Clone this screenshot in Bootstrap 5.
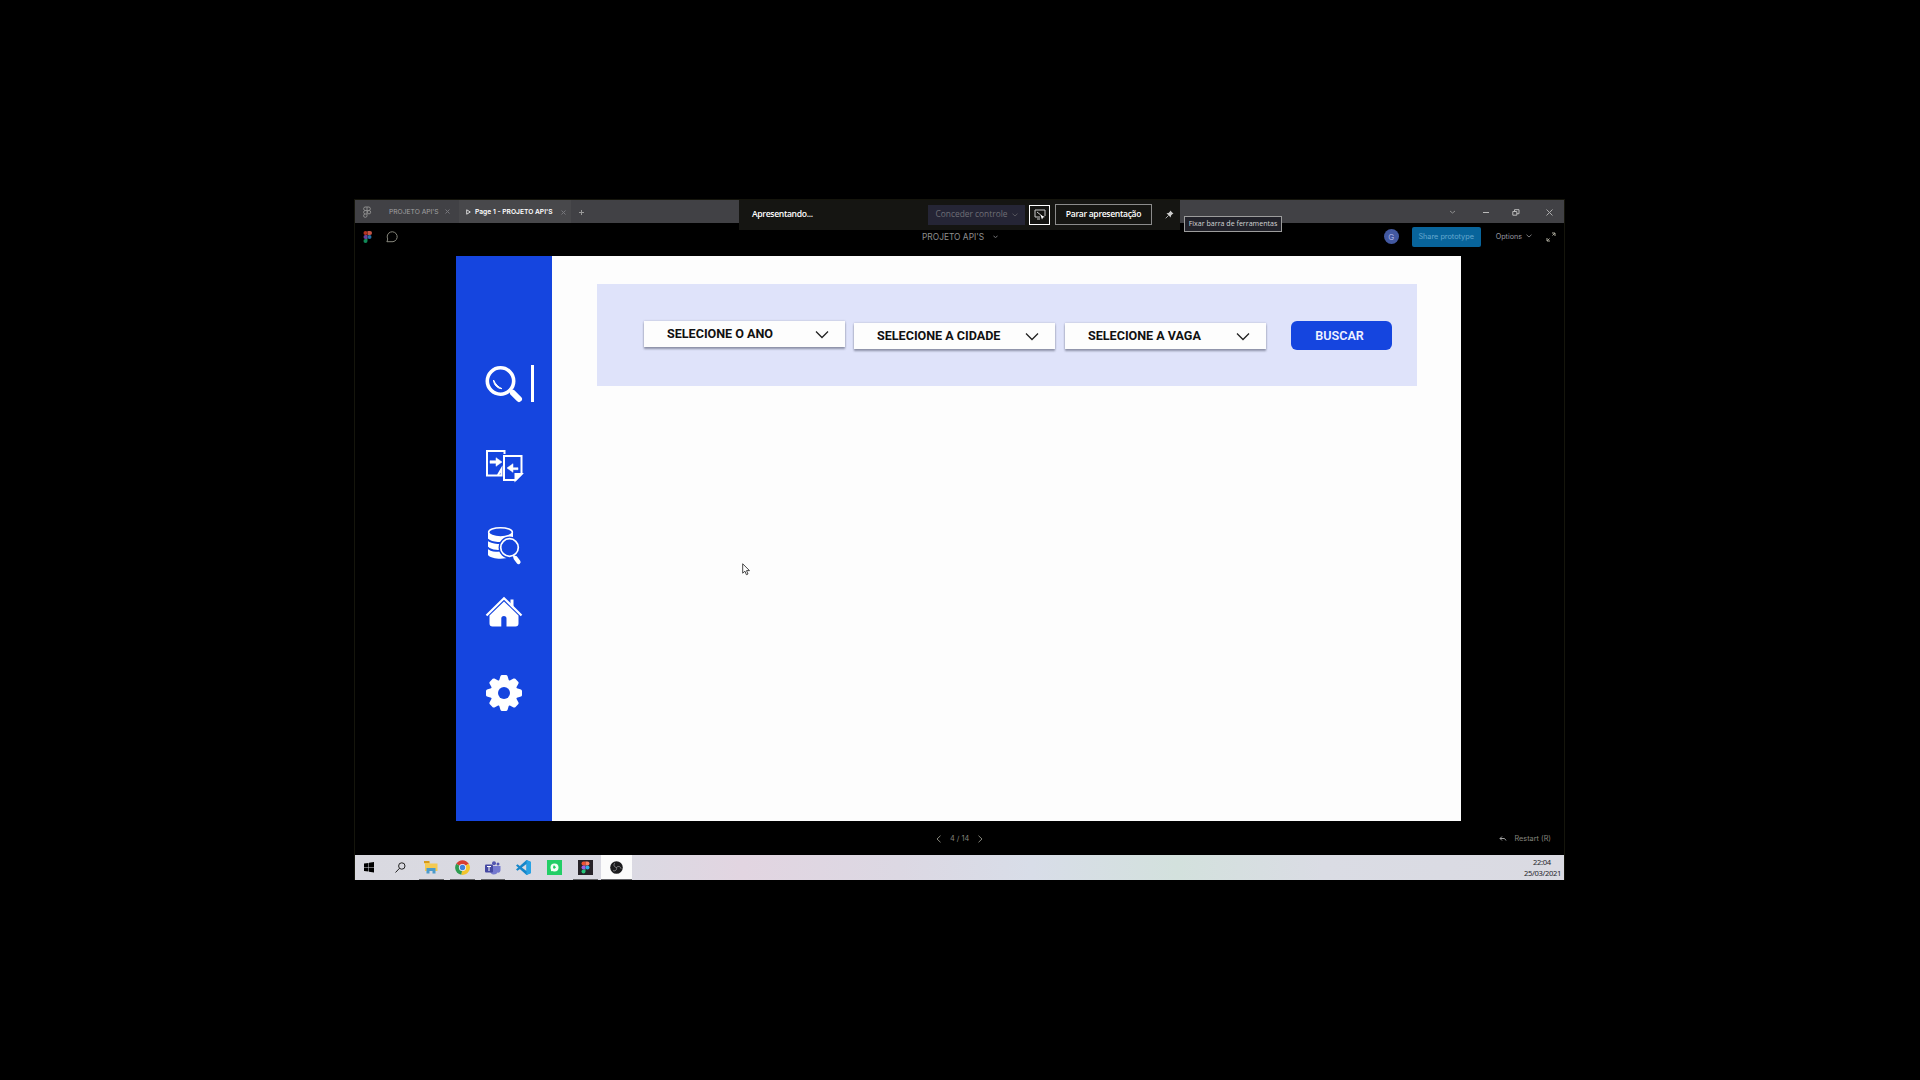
<!DOCTYPE html>
<html lang="pt-BR">
<head>
<meta charset="utf-8">
<meta name="viewport" content="width=device-width, initial-scale=1">
<title>Projeto API's</title>
<link href="https://cdn.jsdelivr.net/npm/bootstrap@5.3.0/dist/css/bootstrap.min.css" rel="stylesheet">
<style>
  body { background:#000; font-family:Inter,"Liberation Sans",sans-serif; overflow:hidden; height:1080px; line-height:1; white-space:nowrap; }
  svg { display:block; flex:none; }
  .desktop { width:1211px; height:681px; margin:199px 0 0 354px; }
  .desktop::after { content:""; position:absolute; inset:0; border:1px solid #15150c; border-bottom:0; pointer-events:none; }
  .titlebar { height:24px; padding-top:2px; background:#414145; color:#a2a2a4; font-size:6.7px; }
  .tab-active { width:112px; background:#48484b; color:#fff; font-weight:600; padding-left:7px; margin:-2px 0 0 1px; padding-top:2px; height:24px; }
  .tab-idle { width:65px; margin-left:17px; }
  .win-controls { gap:22px; padding-right:12px; color:#b0b0b0; }
  .proto-head { height:33px; color:#8f8f8f; padding-bottom:6px; }
  .file-name { font-size:8.4px; width:76px; }
  .avatar { width:15px; height:15px; background:#4258a0; color:#a5aee0; font-size:8px; }
  .share { width:69px; height:20px; background:#08649b; color:#65a8cf; font-size:7.3px; border-radius:2px; }
  .opts { font-size:7.2px; color:#9999a2; }
  .stage { width:1005px; height:565px; margin-left:102px; background:#fdfdfd; }
  .side { width:96px; background:#1545df; color:#fff; }
  .side svg { margin-left:29px; }
  .filters { width:820px; height:102px; margin:28px 0 0 45px; background:#dfe3fa; padding:37px 0 0 47px; font-family:Roboto,sans-serif; }
  .picker { width:201px; height:26px; background:#fdfdfd; border:0; box-shadow:0 2px 2px #8d91a7, 0 0 2px #b5b8cc; padding:0 16px 0 23px; font-size:12.6px; font-weight:700; color:#111; letter-spacing:-.02px; }
  .go { width:101px; height:29px; background:#1545df; color:#eef1ff; border-radius:6px; font-size:12.6px; font-weight:600; padding:1px 4px 0 0; border:0; }
  .go:hover { background:#1545df; color:#fff; }
  .proto-foot { height:34px; color:#85857d; font-size:7.3px; padding-top:2px; }
  .taskbar { height:25px; background:linear-gradient(90deg,#d9d9e0 0%,#dadae3 22%,#e2d5e1 32%,#dcd8e3 45%,#d8dde8 56%,#d3e1dd 68%,#dadce4 80%,#dadae2 100%); }
  .app { width:30.9px; height:25px; position:relative; }
  .app.running::after { content:""; position:absolute; bottom:0; left:3px; right:3px; height:1px; background:#646468; }
  .app.current { background:#fbfbfb; }
  .app.current::after { left:0; right:0; }
  .clock { font:7.6px/11px "Noto Sans",sans-serif; letter-spacing:-.35px; color:#26262c; padding-right:4px; }
  .share-bar { left:385px; top:0; width:441px; height:31px; background:#151512; font-family:"Open Sans",sans-serif; font-weight:600; font-size:8.6px; letter-spacing:-.34px; color:#fff; }
  .grant { width:97px; height:20px; margin-left:115px; background:#252535; color:#6f6f75; font-size:8.4px; font-weight:400; letter-spacing:0; }
  .mini { width:21px; height:20px; border:1px solid #fff; margin-left:4px; }
  .stop { width:97px; height:21px; border:1px solid #8b8b8b; margin-left:5px; }
  .tip { left:830px; top:17px; width:98px; height:16px; background:#22222a; border:1px solid #9c9c9c; color:#d4d4d4; font:7.1px/13px "Open Sans",sans-serif; }
  .pointer { left:388px; top:364px; }
</style>
<script src="https://cdn.jsdelivr.net/npm/bootstrap@5.3.0/dist/js/bootstrap.bundle.min.js"></script>
</head>
<body>
<main class="desktop position-relative d-flex flex-column">
  <header class="titlebar d-flex align-items-center">
    <svg class="ms-2" width="10" height="12" viewBox="0 0 10 12" fill="none" stroke="#8c8c8c" stroke-width="1"><path d="M5 1H3a1.8 1.8 0 0 0 0 3.5h2zm0 0h2a1.8 1.8 0 0 1 0 3.5H5M5 4.500H3A1.800 1.800 0 0 0 3 8h2zM3 8a1.700 1.700 0 1 0 2 1.700V8"/><circle cx="7" cy="6.200" r="1.700"/></svg>
    <div class="tab-idle d-flex align-items-center justify-content-between"><span>PROJETO API'S</span><svg class="me-1" width="5" height="5" viewBox="0 0 5 5" stroke="#77777c"><path d="M.5.5l4 4m0-4l-4 4"/></svg></div>
    <div class="tab-active d-flex align-items-center" style="margin-left:5px"><svg width="5" height="6" viewBox="0 0 5 6" fill="none" stroke="#d5d5d5"><path d="M.7.8v4.400L4.300 3z"/></svg><span class="ms-1">Page 1 - PROJETO API'S</span><svg class="ms-2" width="5" height="5" viewBox="0 0 5 5" stroke="#77777c"><path d="M.5.5l4 4m0-4l-4 4"/></svg></div>
    <svg class="ms-2" width="5" height="5" viewBox="0 0 5 5" stroke="#999"><path d="M2.500 0v5M0 2.500h5"/></svg>
    <div class="win-controls d-flex align-items-center ms-auto">
      <svg width="7" height="6" viewBox="0 0 7 6" fill="none" stroke="#8f8f8f"><path d="M1 2l2.500 2L6 2"/></svg>
      <svg width="8" height="6" viewBox="0 0 8 6" stroke="#bbb" class="ms-1"><path d="M1 3.500h6"/></svg>
      <svg width="8" height="7" viewBox="0 0 8 7" fill="none" stroke="#bbb" class="me-1"><path d="M.8 2.500h4v3.700h-4zM2.500 2V.7H7v4H5"/></svg>
      <svg width="7" height="7" viewBox="0 0 7 7" fill="none" stroke="#aaa"><path d="M.5.5l6 6m0-6l-6 6"/></svg>
    </div>
  </header>

  <section class="proto-head d-flex align-items-center">
    <svg style="margin-left:9px" width="9" height="12" viewBox="0 0 9 12"><rect x=".5" width="4" height="4" rx="2" fill="#b53322"/><path d="M4.500 0H7a2 2 0 0 1 0 4H4.500z" fill="#c35345"/><path d="M4.500 4h-2a2 2 0 0 0 0 4h2z" fill="#65429b"/><circle cx="6.500" cy="6" r="2" fill="#2570a5"/><path d="M4.500 8h-2a2 2 0 1 0 2 2z" fill="#108a58"/></svg>
    <svg style="margin-left:14px" width="13" height="12" viewBox="0 0 13 12" fill="none" stroke="#85857b"><path d="M1 11l.7-3A5 5 0 1 1 7 10.700H1z"/></svg>
    <div class="file-name d-flex align-items-center justify-content-between" style="margin:1px 0 0 523px"><span>PROJETO API'S</span><svg width="5" height="4" viewBox="0 0 5 4" fill="none" stroke="#77777a"><path d="M.5 1l2 1.500L4.500 1"/></svg></div>
    <div class="avatar rounded-circle d-flex align-items-center justify-content-center ms-auto">G</div>
    <div class="share d-flex align-items-center justify-content-center" style="margin-left:13px">Share prototype</div>
    <div class="opts d-flex align-items-center gap-1" style="margin-left:15px">Options <svg width="6" height="4" viewBox="0 0 6 4" fill="none" stroke="#77777a"><path d="M.5.7L3 3 5.500.7"/></svg></div>
    <svg style="margin:0 9px 0 14px" width="10" height="10" viewBox="0 0 10 10" fill="none" stroke="#aaa89a"><path d="M6 1h3v3M9 1L6.500 3.500M1 6v3h3M1 9l2.500-2.500"/></svg>
  </section>

  <section class="stage d-flex">
    <nav class="side d-flex flex-column align-items-start">
      <svg style="margin-top:108px" width="50" height="40" viewBox="0 0 50 40"><circle cx="15.500" cy="17" r="13.200" fill="none" stroke="#fff" stroke-width="3.600"/><path d="M8.500 16c.5 5.500 4 8.500 8.500 8.700-4-1.800-6.500-4.500-8.500-8.700z" fill="#fff" stroke="#fff"/><path d="M25 26l3 3" stroke="#fff" stroke-width="3"/><path d="M28 29l6 6" stroke="#fff" stroke-width="6" stroke-linecap="round"/><path d="M47.500 1v37" stroke="#fff" stroke-width="3"/></svg>
      <svg style="margin-top:45px" width="39" height="34" viewBox="0 0 39 34" fill="none" stroke="#fff" stroke-width="2"><path d="M19.500 5V2H2v24.500h14.500V20l-3.500 6"/><path d="M19 7h17.500v18l-6 6H19z"/><path d="M30.500 31v-6h6z" fill="#fff"/><path d="M5 11.700h6V8.700l6 4.300-6 4.300v-3H5zM33 18.700h-5v-4L22 19l6 4.300v-2.600h5z" fill="#fff" stroke="#fff" stroke-width=".5"/></svg>
      <svg style="margin-top:42px" width="39" height="40" viewBox="0 0 39 40"><path d="M3 7v23c4 5 21 5 25 0V7z" fill="#fff"/><path d="M2 2h27v6H2z" fill="#1545df"/><ellipse cx="15.500" cy="7.300" rx="11.900" ry="4.600" fill="#1545df" stroke="#fff" stroke-width="1.500"/><path d="M2.500 14.500c5 4.500 16 4 18 2M2.500 22.500c4 4 13 4 17 2" stroke="#1545df" stroke-width="1.900" fill="none"/><circle cx="24.500" cy="22.500" r="10.900" fill="#1545df"/><circle cx="24.500" cy="22.500" r="8.800" fill="none" stroke="#fff" stroke-width="1.700"/><path d="M28.500 30.500l2 3" stroke="#fff" stroke-width="2"/><path d="M30.500 33l3 4" stroke="#fff" stroke-width="4.200" stroke-linecap="round"/></svg>
      <svg style="margin-top:30px" width="39" height="34" viewBox="0 0 39 34" fill="#fff"><path d="M25.500 4.500h3V14l-3-3z"/><path d="M1.500 20.500L19 3.200l17.500 17.300" fill="none" stroke="#fff" stroke-width="2.200"/><path d="M4.500 20.500L19 6.500l14.500 14v8a3 3 0 0 1-3 3H21.500v-8a2.600 2.600 0 0 0-5.200 0v8H7.500a3 3 0 0 1-3-3z"/></svg>
      <svg style="margin-top:45px" width="39" height="39" viewBox="0 0 39 39"><g fill="#fff" transform="translate(19 19)"><circle r="13.500"/><g id="gear-pair"><path d="M-5-12l1.500-5q.5-1 1.500-1h4q1 0 1.500 1l1.500 5zM-5 12l1.500 5q.5 1 1.500 1h4q1 0 1.500-1L5 12z"/></g><use href="#gear-pair" transform="rotate(45)"/><use href="#gear-pair" transform="rotate(90)"/><use href="#gear-pair" transform="rotate(135)"/><circle r="6" fill="#1545df"/></g></svg>
    </nav>
    <div class="filters d-flex align-items-start">
      <button class="picker d-flex align-items-center justify-content-between" type="button">SELECIONE O ANO <svg width="14" height="9" viewBox="0 0 14 9" fill="none" stroke="#222" stroke-width="1.300"><path d="M1 1.500l6 6 6-6"/></svg></button>
      <button class="picker d-flex align-items-center justify-content-between" style="margin:2px 0 0 9px" type="button">SELECIONE A CIDADE <svg width="14" height="9" viewBox="0 0 14 9" fill="none" stroke="#222" stroke-width="1.300"><path d="M1 1.500l6 6 6-6"/></svg></button>
      <button class="picker d-flex align-items-center justify-content-between" style="margin:2px 0 0 10px" type="button">SELECIONE A VAGA <svg width="14" height="9" viewBox="0 0 14 9" fill="none" stroke="#222" stroke-width="1.300"><path d="M1 1.500l6 6 6-6"/></svg></button>
      <button class="btn go" style="margin-left:25px" type="button">BUSCAR</button>
    </div>
  </section>

  <footer class="proto-foot d-flex align-items-center">
    <svg style="margin-left:582px" width="5" height="8" viewBox="0 0 5 8" fill="none" stroke="#85857b"><path d="M4.500.7L1 4l3.500 3.300"/></svg>
    <span style="margin-left:9px;width:28px">4 / 14</span>
    <svg width="5" height="8" viewBox="0 0 5 8" fill="none" stroke="#85857b"><path d="M.5.7L4 4 .5 7.300"/></svg>
    <svg class="ms-auto" width="8" height="6" viewBox="0 0 8 6" fill="none" stroke="#a0a0a0"><path d="M3 .5L1 2.500l2 2M1 2.500h4.500l1.500 2"/></svg>
    <span style="margin:0 14px 0 7px">Restart (R)</span>
  </footer>

  <footer class="taskbar d-flex align-items-center">
    <div class="app d-flex align-items-center justify-content-center"><svg width="10" height="11" viewBox="0 0 10 11"><path d="M0 1.500L4.500 1v4H0zM5 .8L10 0v5H5zM0 5.600h4.500v4L0 9zM5 5.600h5v5L5 9.800z"/></svg></div>
    <div class="app d-flex align-items-center justify-content-center"><svg width="11" height="11" viewBox="0 0 11 11" fill="none" stroke="#222" stroke-width="1"><circle cx="6.800" cy="4" r="3.200"/><path d="M4.500 6.300L.5 10.500"/></svg></div>
    <div class="app running d-flex align-items-center justify-content-center"><svg width="14" height="13" viewBox="0 0 14 13"><path d="M0 1h5l1 1.500h7.500V10H1V2.500H0z" fill="#f5ca51"/><path d="M0 0h5.500v2H0z" fill="#d79a19"/><path d="M2.500 7h9v5.500h-3V10h-3v2.500h-3z" fill="#4c9bcc"/></svg></div>
    <div class="app running d-flex align-items-center justify-content-center"><svg width="15" height="15" viewBox="0 0 15 15"><path d="M7.500 7.500L1.200 3.800a7.300 7.300 0 0 1 12.600 0z" fill="#d83d31"/><path d="M7.500 7.500L1.200 3.800a7.300 7.300 0 0 0 5.300 11z" fill="#2d9c50"/><path d="M7.500 7.500l6.300-3.700a7.300 7.300 0 0 1-7.300 11z" fill="#f2c52c"/><circle cx="7.500" cy="7.500" r="3.600" fill="#eef"/><circle cx="7.500" cy="7.500" r="2.700" fill="#3e83dc"/></svg></div>
    <div class="app running d-flex align-items-center justify-content-center"><svg width="16" height="14" viewBox="0 0 16 14" fill="#5356b0"><circle cx="9" cy="2.200" r="2"/><circle cx="13" cy="3" r="1.500"/><path d="M5 5h10.500v4c0 2-1.500 3-3 2.500C11.500 14 5 14.500 5 10z" fill="#7479cf"/><rect y="3.500" width="8" height="8" rx="1" fill="#4548a2"/><path d="M2 5.500h4M4 5.500v4.500" stroke="#fff" fill="none"/></svg></div>
    <div class="app d-flex align-items-center justify-content-center"><svg width="15" height="15" viewBox="0 0 15 15"><path d="M10.500 0L15 2v11l-4.500 2L1 6.500 0 5.500l1.500-1.200L10.500 11V4L1.500 10.700 0 9.500z" fill="#1686c9"/><path d="M10.500 0L15 2v11l-4.500 2z" fill="#28a2e4"/></svg></div>
    <div class="app d-flex align-items-center justify-content-center"><svg width="15" height="15" viewBox="0 0 15 15"><rect width="15" height="15" fill="#22ce66"/><circle cx="7.500" cy="7.500" r="4" fill="#f2fff6"/><path d="M4 8.500v2.800l2.500-.6z" fill="#f2fff6"/><path d="M6.500 5.500h1l1.500 2-2 1.500-1-1.500z" fill="#22ce66"/></svg></div>
    <div class="app running d-flex align-items-center justify-content-center"><svg width="15" height="15" viewBox="0 0 15 15"><rect width="15" height="15" fill="#272329"/><path d="M7.500 1.500h-2a2 2 0 0 0 0 4h2z" fill="#ef5130"/><path d="M7.500 1.500h2a2 2 0 0 1 0 4h-2z" fill="#ff8265"/><path d="M7.500 5.500h-2a2 2 0 0 0 0 4h2z" fill="#9960e5"/><circle cx="9.500" cy="7.500" r="2" fill="#2eaee8"/><path d="M7.500 9.500h-2a2 2 0 1 0 2 2z" fill="#24c57a"/></svg></div>
    <div class="app running current d-flex align-items-center justify-content-center"><svg width="13" height="13" viewBox="0 0 13 13"><circle cx="6.500" cy="6.500" r="6.300" fill="#1c1c1e"/><path d="M6.500 6.500C3.500 6 3.500 3 5 2M6.500 6.500c2-2.200 4.500-.5 4.500 1.300M6.500 6.500C7.200 9.300 4.500 10.500 3 9.500" stroke="#87878a" fill="none"/></svg></div>
    <div class="clock ms-auto"><div style="padding-left:9px">22:04</div><div>25/03/2021</div></div>
  </footer>

  <div class="share-bar position-absolute d-flex align-items-center">
    <span style="margin-left:13px;width:61px">Apresentando...</span>
    <div class="grant d-flex align-items-center justify-content-center gap-1">Conceder controle <svg width="6" height="4" viewBox="0 0 6 4" fill="none" stroke="#55555d"><path d="M.5.7L3 3 5.500.7"/></svg></div>
    <div class="mini d-flex align-items-center justify-content-center"><svg width="12" height="11" viewBox="0 0 12 11" fill="none" stroke="#ccc"><path d="M6 8H1V1h10v6M3 3l5 4"/><path d="M6.500 6l4.500 2-2 .5-1 2z" fill="#fff" stroke="none"/><path d="M3 10h3"/></svg></div>
    <div class="stop d-flex align-items-center justify-content-center">Parar apresentação</div>
    <svg style="margin-left:13px" width="9" height="9" viewBox="0 0 9 9"><path d="M5.200.5L8.500 3.800 7.500 4 6 5.500 5.700 7.500 1.500 3.300 3.500 3 5 1.500z" fill="#ccc"/><path d="M3.500 5.500L.7 8.300" stroke="#aaa"/></svg>
  </div>
  <div class="tip position-absolute text-center">Fixar barra de ferramentas</div>
  <svg class="pointer position-absolute" width="9" height="13" viewBox="0 0 9 13"><path d="M.7.8v9.400l2.200-2 1.500 3.500 1.600-.7-1.500-3.400h3z" fill="#fff" stroke="#333" stroke-width=".9"/></svg>
</main>
</body>
</html>
